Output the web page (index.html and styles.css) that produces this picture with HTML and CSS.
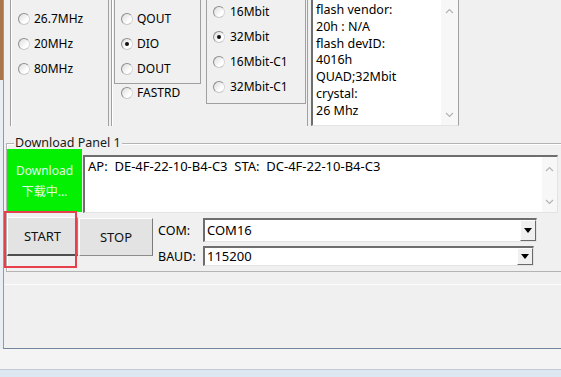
FILE: index.html
```html
<!DOCTYPE html>
<html lang="zh-CN">
<head>
    <meta charset="UTF-8">
    <meta name="viewport" content="width=device-width, initial-scale=1.0">
    <title>Download Tool</title>
    <link rel="stylesheet" href="styles.css">
</head>
<body>
    <div class="screen">
        <div class="desk-row">
            <div class="desk"></div>
            <div class="window">
                <div class="top">
                    <div class="grp g1">
                        <div class="opt"><span class="radio"></span>26.7MHz</div>
                        <div class="opt"><span class="radio"></span>20MHz</div>
                        <div class="opt"><span class="radio"></span>80MHz</div>
                    </div>
                    <div class="grp g2">
                        <div class="inner">
                            <div class="opt"><span class="radio"></span>QOUT</div>
                            <div class="opt"><span class="radio on"></span>DIO</div>
                            <div class="opt"><span class="radio"></span>DOUT</div>
                        </div>
                        <div class="opt fastrd"><span class="radio"></span>FASTRD</div>
                    </div>
                    <div class="g3">
                        <div class="box">
                            <div class="opt"><span class="radio"></span>16Mbit</div>
                            <div class="opt"><span class="radio on"></span>32Mbit</div>
                            <div class="opt"><span class="radio"></span>16Mbit-C1</div>
                            <div class="opt"><span class="radio"></span>32Mbit-C1</div>
                        </div>
                    </div>
                    <div class="info">
                        <div class="info-text">
                            flash vendor:<br>
                            20h : N/A<br>
                            flash devID:<br>
                            4016h<br>
                            QUAD;32Mbit<br>
                            crystal:<br>
                            26 Mhz
                        </div>
                        <div class="vscroll">
                            <svg width="9" height="6" viewBox="0 0 9 6"><polyline points="1,5 4.5,1.5 8,5" fill="none" stroke="#b4b4b4" stroke-width="1.2"/></svg>
                            <svg width="9" height="6" viewBox="0 0 9 6"><polyline points="1,1 4.5,4.5 8,1" fill="none" stroke="#b4b4b4" stroke-width="1.2"/></svg>
                        </div>
                    </div>
                </div>

                <div class="panel">
                    <div class="panel-title">Download Panel 1</div>
                    <div class="panel-row">
                        <div class="state">Download<br>下载中...</div>
                        <div class="log">
                            <div class="log-text">AP:&nbsp; DE-4F-22-10-B4-C3&nbsp; STA:&nbsp; DC-4F-22-10-B4-C3</div>
                            <div class="vscroll small">
                                <svg width="9" height="6" viewBox="0 0 9 6"><polyline points="1,5 4.5,1.5 8,5" fill="none" stroke="#b4b4b4" stroke-width="1.2"/></svg>
                                <svg width="9" height="6" viewBox="0 0 9 6"><polyline points="1,1 4.5,4.5 8,1" fill="none" stroke="#b4b4b4" stroke-width="1.2"/></svg>
                            </div>
                        </div>
                    </div>
                    <div class="ctrl-row">
                        <button class="btn start">START</button>
                        <button class="btn stop">STOP</button>
                        <div class="ports">
                            <div class="port-row">
                                <span class="port-label">COM:</span>
                                <div class="combo com">COM16<span class="drop"><span class="tri"></span></span></div>
                            </div>
                            <div class="port-row baud">
                                <span class="port-label">BAUD:</span>
                                <div class="combo">115200<span class="drop"><span class="tri"></span></span></div>
                            </div>
                        </div>
                    </div>
                    <div class="mark"></div>
                </div>
                <div class="after"></div>
            </div>
        </div>
        <div class="status-strip"></div>
        <div class="taskbar"></div>
    </div>
</body>
</html>
```

FILE: styles.css
```css
body {
    margin: 0;
    background: #f0f0f0;
    font-family: "Noto Sans", "Noto Sans CJK SC", sans-serif;
    font-size: 12px;
    color: #000;
    overflow: hidden;
}
.screen {
    width: 561px;
    height: 377px;
    display: flex;
    flex-direction: column;
    overflow: hidden;
}
.desk-row {
    display: flex;
    height: 349px;
}
.desk {
    width: 3px;
    background: linear-gradient(180deg, #a8764a 0, #a8764a 80px, #e9eef4 80px);
}
.window {
    flex: 1;
    background: #f0f0f0;
    border-left: 1px solid #8b9cb0;
    border-bottom: 1px solid #72859b;
    overflow: hidden;
}

/* top option groups */
.top {
    display: flex;
    align-items: flex-start;
    height: 126px;
}
.grp {
    height: 126px;
    box-sizing: border-box;
    border-left: 1px solid #a0a0a0;
    box-shadow: inset 1px 0 #fff;
}
.g1 {
    margin-left: 6px;
    width: 99px;
    border-right: 1px solid #a0a0a0;
    padding: 6px 0 0 7px;
}
.g2 {
    margin-left: 2px;
    width: 95px;
}
.g2 .inner {
    margin-left: 2px;
    width: 87px;
    height: 84px;
    box-sizing: border-box;
    border: 1px solid #a0a0a0;
    border-top: none;
    padding: 6px 0 0 6px;
}
.g2 .fastrd {
    margin-top: -4px;
    padding-left: 9px;
}
.g3 {
    width: 102px;
    height: 126px;
    box-sizing: border-box;
    border-right: 1px solid #a0a0a0;
}
.g3 .box {
    width: 100px;
    height: 105px;
    box-sizing: border-box;
    border: 1px solid #a0a0a0;
    border-top: none;
    padding-left: 6px;
}
.g3 .box .opt:first-child {
    margin-top: -1px;
}
.g3 .opt {
    gap: 5px;
}
.opt {
    display: flex;
    align-items: center;
    gap: 4px;
    height: 25px;
    white-space: nowrap;
}
.radio {
    width: 12px;
    height: 12px;
    box-sizing: border-box;
    border-radius: 50%;
    border: 1px solid #8e8e8e;
    border-right-color: #d6d6d6;
    border-bottom-color: #c8c8c8;
    background: linear-gradient(135deg, #dcdcdc, #ffffff 70%);
    display: flex;
    align-items: center;
    justify-content: center;
    flex: none;
}
.radio.on::after {
    content: "";
    width: 4px;
    height: 4px;
    border-radius: 50%;
    background: #111;
}

/* flash info box */
.info {
    margin-left: 3px;
    width: 148px;
    height: 126px;
    box-sizing: border-box;
    background: #fff;
    border-left: 2px solid #6e6e6e;
    border-right: 1px solid #a0a0a0;
    border-bottom: 1px solid #e3e3e3;
    display: flex;
}
.info-text {
    flex: 1;
    padding: 2px 0 0 3px;
    font-size: 12.5px;
    line-height: 16.8px;
    white-space: nowrap;
    overflow: hidden;
}
.vscroll {
    width: 17px;
    background: #f7f7f7;
    display: flex;
    flex-direction: column;
    justify-content: space-between;
    align-items: center;
    padding: 8px 0 7px;
    box-sizing: border-box;
}
.vscroll.small {
    width: 15px;
    padding: 9px 0 7px;
}

/* download panel */
.panel {
    position: relative;
    margin: 17px -20px 0 2px;
    height: 129px;
    box-sizing: border-box;
    border: 1px solid #b4b4b4;
    border-right: none;
    box-shadow: inset 1px 1px #fff;
}
.panel-title {
    width: fit-content;
    margin: -9px 0 0 7px;
    padding: 0 1px;
    line-height: 15px;
    font-size: 12.5px;
    background: #f0f0f0;
    color: #1a1a1a;
}
.panel-row {
    display: flex;
    align-items: flex-start;
    margin-top: -1px;
}
.state {
    width: 75px;
    height: 63px;
    box-sizing: border-box;
    background: #03f003;
    color: #e4fbe4;
    text-align: center;
    font-size: 12px;
    line-height: 21px;
    padding-top: 11px;
}
.log {
    margin: 6px 0 0 1px;
    width: 475px;
    height: 58px;
    box-sizing: border-box;
    background: #fff;
    border-top: 2px solid #6e6e6e;
    border-left: 2px solid #6e6e6e;
    border-bottom: 1px solid #e3e3e3;
    border-right: 1px solid #e3e3e3;
    display: flex;
}
.log-text {
    flex: 1;
    padding: 1px 0 0 3px;
    line-height: 17px;
    font-size: 13px;
    white-space: nowrap;
}
.ctrl-row {
    display: flex;
    align-items: flex-start;
    margin-top: 4px;
}
.btn {
    font-family: "Noto Sans", sans-serif;
    font-size: 13px;
    color: #111;
    background: #e3e3e3;
    border: 1px solid #adadad;
    border-top-color: #fdfdfd;
    border-left-color: #fdfdfd;
    height: 39px;
    margin: 0;
    padding: 0;
}
.start {
    width: 71px;
    border-bottom: 2px solid #4e4e4e;
    border-right-color: #8a8a8a;
}
.stop {
    width: 74px;
    margin-left: 1px;
    margin-top: 1px;
    height: 38px;
    border-right-color: #7a7a7a;
    border-bottom-color: #8c8c8c;
}
.ports {
    margin: 1px 0 0 5px;
}
.port-row {
    display: flex;
    align-items: center;
    height: 24px;
}
.port-row.baud {
    margin-top: 4px;
    height: 20px;
}
.port-label {
    width: 45px;
    font-size: 12.5px;
}
.combo {
    position: relative;
    width: 331px;
    height: 100%;
    box-sizing: border-box;
    background: #fff;
    border-top: 2px solid #6e6e6e;
    border-left: 2px solid #6e6e6e;
    border-bottom: 1px solid #e3e3e3;
    border-right: 1px solid #e3e3e3;
    font-size: 13px;
    line-height: 19px;
    padding-left: 2px;
    display: flex;
    align-items: center;
}
.combo.com {
    width: 334px;
}
.drop {
    margin-left: auto;
    align-self: stretch;
    width: 16px;
    box-sizing: border-box;
    background: #f0f0f0;
    border: 1px solid #fff;
    border-right-color: #6a6a6a;
    border-bottom-color: #6a6a6a;
    display: flex;
    align-items: center;
    justify-content: center;
}
.tri {
    width: 0;
    height: 0;
    border-left: 4px solid transparent;
    border-right: 4px solid transparent;
    border-top: 5px solid #000;
}
.mark {
    position: absolute;
    left: -3px;
    top: 67px;
    width: 73px;
    height: 57px;
    box-sizing: border-box;
    border: 2px solid #e5404b;
}
.after {
    margin-top: 12px;
    height: 1px;
    background: #fbfbfb;
}

/* below the window */
.status-strip {
    height: 20px;
    background: #f4f4f4;
    border-bottom: 1px solid #c3cad3;
}
.taskbar {
    flex: 1;
    background: #dde7f1;
}
```
